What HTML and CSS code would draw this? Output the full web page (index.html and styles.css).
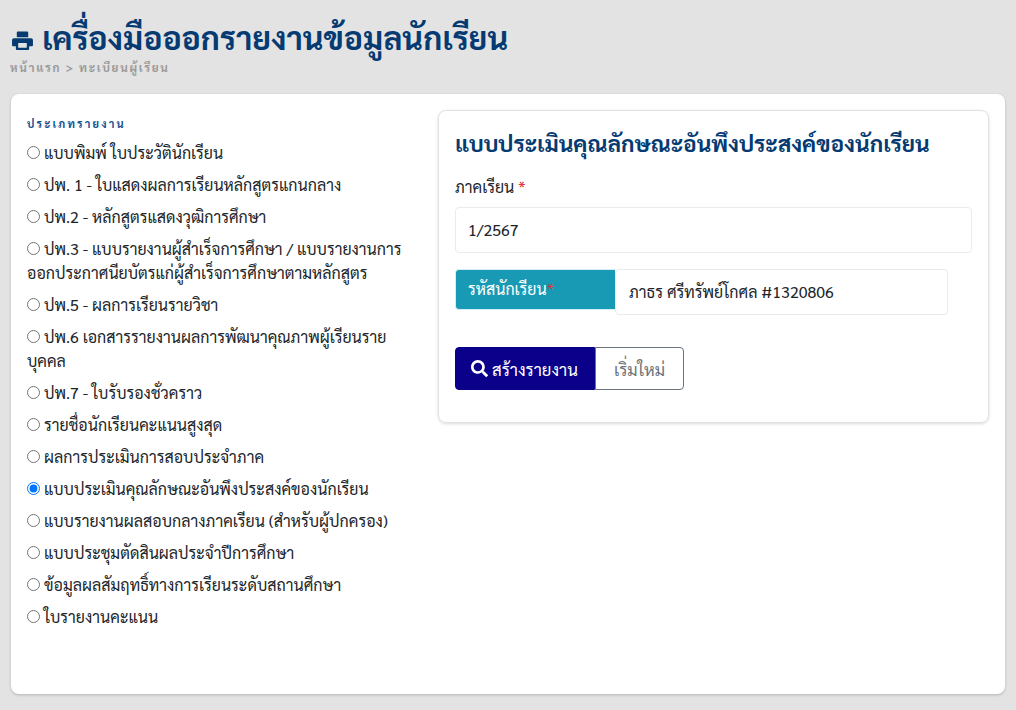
FILE: index.html
```html
<!DOCTYPE html>
<html lang="th">
<head>
<meta charset="utf-8">
<title>เครื่องมือออกรายงานข้อมูลนักเรียน</title>
<link rel="stylesheet" href="styles.css">
</head>
<body>
<header class="page-head">
  <h1 class="page-title">
    <svg class="print-icon" viewBox="0 0 22 20" aria-hidden="true"><path fill-rule="evenodd" d="M5 1.5a1 1 0 0 1 1-1h10a1 1 0 0 1 1 1v5H5zM2 7.5h18a2 2 0 0 1 2 2V15a1 1 0 0 1-1 1h-3v3a1 1 0 0 1-1 1H5a1 1 0 0 1-1-1v-3H1a1 1 0 0 1-1-1V9.500a2 2 0 0 1 2-2zM6.500 12.500h9v5h-9z"/></svg>
    <span>เครื่องมือออกรายงานข้อมูลนักเรียน</span>
  </h1>
  <div class="crumbs">หน้าแรก &gt; ทะเบียนผู้เรียน</div>
</header>
<main class="panel">
  <section class="report-types">
    <div class="section-label">ประเภทรายงาน</div>
    <label class="opt"><input type="radio" name="r">แบบพิมพ์ ใบประวัตินักเรียน</label>
    <label class="opt"><input type="radio" name="r">ปพ. 1 - ใบแสดงผลการเรียนหลักสูตรแกนกลาง</label>
    <label class="opt"><input type="radio" name="r">ปพ.2 - หลักสูตรแสดงวุฒิการศึกษา</label>
    <label class="opt"><input type="radio" name="r">ปพ.3 - แบบรายงานผู้สำเร็จการศึกษา / แบบรายงานการออกประกาศนียบัตรแก่ผู้สำเร็จการศึกษาตามหลักสูตร</label>
    <label class="opt"><input type="radio" name="r">ปพ.5 - ผลการเรียนรายวิชา</label>
    <label class="opt"><input type="radio" name="r">ปพ.6 เอกสารรายงานผลการพัฒนาคุณภาพผู้เรียนรายบุคคล</label>
    <label class="opt"><input type="radio" name="r">ปพ.7 - ใบรับรองชั่วคราว</label>
    <label class="opt"><input type="radio" name="r">รายชื่อนักเรียนคะแนนสูงสุด</label>
    <label class="opt"><input type="radio" name="r">ผลการประเมินการสอบประจำภาค</label>
    <label class="opt"><input type="radio" name="r" checked>แบบประเมินคุณลักษณะอันพึงประสงค์ของนักเรียน</label>
    <label class="opt"><input type="radio" name="r">แบบรายงานผลสอบกลางภาคเรียน (สำหรับผู้ปกครอง)</label>
    <label class="opt"><input type="radio" name="r">แบบประชุมตัดสินผลประจำปีการศึกษา</label>
    <label class="opt"><input type="radio" name="r">ข้อมูลผลสัมฤทธิ์ทางการเรียนระดับสถานศึกษา</label>
    <label class="opt"><input type="radio" name="r">ใบรายงานคะแนน</label>
  </section>
  <section class="form-card">
    <h2 class="form-title">แบบประเมินคุณลักษณะอันพึงประสงค์ของนักเรียน</h2>
    <div class="field-label">ภาคเรียน <span class="req">*</span></div>
    <div class="input full">1/2567</div>
    <div class="input-group">
      <div class="addon">รหัสนักเรียน<span class="req">*</span></div>
      <div class="input grouped">ภาธร ศรีทรัพย์โกศล #1320806</div>
    </div>
    <div class="btns">
      <button class="btn primary" type="button">
        <svg class="search-icon" viewBox="0 0 512 512" aria-hidden="true"><path d="M505 442.7L405.3 343c-4.5-4.5-10.6-7-17-7H372c27.6-35.3 44-79.7 44-128C416 93.1 322.9 0 208 0S0 93.1 0 208s93.1 208 208 208c48.3 0 92.7-16.4 128-44v16.3c0 6.4 2.5 12.5 7 17l99.7 99.7c9.4 9.4 24.6 9.4 33.9 0l28.3-28.3c9.4-9.4 9.4-24.6.1-34zM208 336c-70.7 0-128-57.2-128-128 0-70.7 57.2-128 128-128 70.7 0 128 57.2 128 128 0 70.7-57.2 128-128 128z"/></svg>
        <span>สร้างรายงาน</span>
      </button>
      <button class="btn outline" type="button">เริ่มใหม่</button>
    </div>
  </section>
</main>
</body>
</html>
```
FILE: styles.css
```css
* { box-sizing: border-box; }
html, body { margin: 0; height: 100%; }
body {
  background: #e3e3e3;
  font-family: Sarabun, "Noto Sans", "Noto Sans Thai Looped", sans-serif;
  font-size: 16px;
  color: #212529;
  padding: 0 11px;
  overflow: hidden;
}
.page-head { height: 94px; padding-top: 15px; }
.page-title {
  margin: 0;
  font-size: 32px;
  line-height: 44px;
  font-weight: 700;
  color: #053b72;
  display: flex;
  align-items: center;
  gap: 9px;
}
.print-icon { width: 21px; height: 19px; fill: #053b72; margin: 6px 0 0 1px; flex: none; }
.crumbs {
  font-size: 11.7px;
  font-weight: 700;
  letter-spacing: 1.7px;
  line-height: 16px;
  color: #999;
  margin: 1px 0 0 -1px;
}
.panel {
  height: 600px;
  background: #fff;
  border-radius: 8px;
  box-shadow: 0 1px 3px rgba(0,0,0,.2);
  padding: 16px 16px 0;
  display: flex;
  gap: 27px;
  align-items: flex-start;
}
.report-types { width: 384px; padding-top: 6px; }
.section-label {
  font-size: 11px;
  font-weight: 700;
  letter-spacing: 2.2px;
  line-height: 16px;
  color: #0d4f94;
  margin-bottom: 9px;
}
.opt { display: block; font-size: 16px; line-height: 24px; margin-bottom: 8px; }
.opt input { margin: 0 4px 0 0; width: 13px; height: 13px; vertical-align: 0; }
.form-card {
  width: 551px;
  height: 313px;
  border: 1px solid #dee2e6;
  border-radius: 8px;
  box-shadow: 0 1px 3px rgba(0,0,0,.15);
  padding: 16px;
}
.form-title {
  margin: 0;
  font-size: 22.6px;
  line-height: 32px;
  font-weight: 700;
  color: #053b72;
}
.field-label { margin-top: 15px; line-height: 25px; }
.req { color: #dc3545; }
.input {
  background: #fff;
  border: 1px solid #e9ecef;
  border-radius: 4px;
  height: 46px;
  padding: 10px 12px;
  line-height: 24px;
}
.input.full { margin-top: 8px; width: 517px; }
.input-group { display: flex; margin-top: 16px; width: 493px; }
.addon {
  width: 160px;
  height: 41px;
  background: #189ab4;
  border: 1px solid #d5eef3;
  border-right: 0;
  color: #fff;
  border-radius: 4px 0 0 4px;
  padding: 7px 12px;
  line-height: 24px;
  flex: none;
}
.grouped { flex: 1; padding-left: 13px; }
.btns { display: flex; margin-top: 32px; }
.btn {
  font: inherit;
  font-size: 16.8px;
  height: 43px;
  line-height: 24px;
  background: #fff;
  border: 1px solid #6c757d;
  display: flex;
  align-items: center;
  white-space: nowrap;
}
.primary {
  width: 140px;
  padding: 0 15px;
  background: #0a008a;
  border-color: #0a008a;
  color: #fff;
  border-radius: 4px 0 0 4px;
  gap: 4px;
}
.search-icon { width: 17px; height: 17px; fill: #fff; flex: none; }
.outline { width: 89px; color: #6c757d; border-radius: 0 4px 4px 0; justify-content: center; padding: 0; }
```
